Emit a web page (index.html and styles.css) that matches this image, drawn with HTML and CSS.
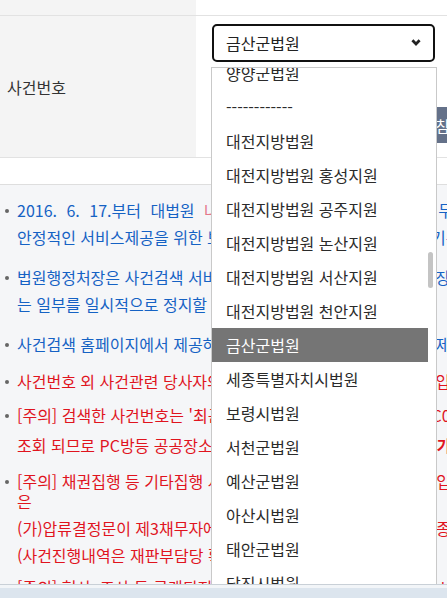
FILE: index.html
```html
<!DOCTYPE html>
<html lang="ko">
<head>
    <meta charset="UTF-8">
    <meta name="viewport" content="width=device-width, initial-scale=1.0">
    <title>나의 사건검색</title>
    <link rel="stylesheet" href="styles.css">
</head>
<body>
    <div class="page">
        <div class="form-row top-row">
            <div class="form-label"></div>
            <div class="form-field"></div>
        </div>
        <div class="form-row case-row">
            <div class="form-label">사건번호</div>
            <div class="form-field">
                <div class="select-box">
                    <span>금산군법원</span>
                    <svg width="10" height="7" viewBox="0 0 10 7"><path d="M1.4 1.3 L5 4.9 L8.6 1.3" fill="none" stroke="#222" stroke-width="2.8"/></svg>
                </div>
                <div class="guide-row">
                    <button class="guide-button">검색 지침</button>
                </div>
            </div>
        </div>
        <div class="spacer-row"></div>

        <div class="notice-area">
            <ul class="notice-list">
                <li class="blue">
                    <div>
                        <span class="line"><span class="date">2016. 6. 17.부터 대법원 </span><span class="pink">나의사건검색</span> 서비스 개인정보보호 무분별한 자동검색 방지를 위하여</span>
                        <span class="line">안정적인 서비스제공을 위한 보안문자 입력 절차를 도입하였고 기존 방식은 폐지되었습니다</span>
                    </div>
                </li>
                <li class="blue">
                    <div>
                        <span class="line">법원행정처장은 사건검색 서비스의 원활한 운영을 위해 필요 시 장애 처리를 위하여 서비스의 전부 또</span>
                        <span class="line">는 일부를 일시적으로 정지할 수 있습니다.</span>
                    </div>
                </li>
                <li class="blue mb-10">
                    <div>
                        <span class="line">사건검색 홈페이지에서 제공하는 정보는 법적 효력이 없으며 그 제공 내용은 참고용입니다</span>
                    </div>
                </li>
                <li class="red mb-7">
                    <div>
                        <span class="line">사건번호 외 사건관련 당사자의 개인정보 보호를 위해 당사자명 입력은 제한됩니다</span>
                    </div>
                </li>
                <li class="red mb-9">
                    <div>
                        <span class="line">[주의] 검색한 사건번호는 '최근검색사건' 목록에 저장되어 타 PC01 등에서도</span>
                        <span class="line pushed">조회 되므로 PC방등 공공장소에서는 이용후 반드시 검색기록을 <strong>가급적 삭제하시기 바랍니다</strong></span>
                    </div>
                </li>
                <li class="red mb-5">
                    <div>
                        <span class="line">[주의] 채권집행 등 기타집행 사건의 경우 당사자에게 송달된 후 입력된</span>
                        <span class="line pulled">은</span>
                        <span class="line">(가)압류결정문이 제3채무자에게 송달되었는지 여부 및 그 송달 종류</span>
                        <span class="line">(사건진행내역은 재판부담당 확인 요망)</span>
                    </div>
                </li>
                <li class="red">
                    <div>
                        <span class="line">[주의] 형사, 조사 등 공개되지 아니하는 사건은 검색되지 않으며 니</span>
                    </div>
                </li>
            </ul>
        </div>
    </div>

    <div class="court-list">
        <div class="court-scroll">
            <div class="court-item">양양군법원</div>
            <div class="court-item">------------</div>
            <div class="court-item">대전지방법원</div>
            <div class="court-item">대전지방법원 홍성지원</div>
            <div class="court-item">대전지방법원 공주지원</div>
            <div class="court-item">대전지방법원 논산지원</div>
            <div class="court-item">대전지방법원 서산지원</div>
            <div class="court-item">대전지방법원 천안지원</div>
            <div class="court-item selected">금산군법원</div>
            <div class="court-item">세종특별자치시법원</div>
            <div class="court-item">보령시법원</div>
            <div class="court-item">서천군법원</div>
            <div class="court-item">예산군법원</div>
            <div class="court-item">아산시법원</div>
            <div class="court-item">태안군법원</div>
            <div class="court-item">당진시법원</div>
        </div>
        <div class="court-scrollbar">
            <div class="thumb"></div>
        </div>
    </div>

    <div class="window-bottom"></div>
</body>
</html>
```

FILE: styles.css
```css
html, body {
    margin: 0;
    padding: 0;
    height: 100%;
    overflow: hidden;
}
body {
    font-family: "Noto Sans CJK KR", "Noto Sans", sans-serif;
    font-size: 16px;
    color: #333;
    background: #fff;
    width: 447px;
}
.page {
    height: 584px;
    overflow: hidden;
    width: 700px;
}
.form-row {
    display: flex;
    border-bottom: 1px solid #e2e2e2;
}
.form-label {
    width: 196px;
    flex-shrink: 0;
    background: #f4f4f4;
    display: flex;
    align-items: center;
    padding-left: 7px;
    box-sizing: border-box;
    color: #333;
}
.form-field {
    flex: 1;
    padding: 8px 0 0 16px;
}
.top-row {
    height: 15px;
}
.top-row .form-field {
    padding: 0;
}
.case-row {
    height: 141px;
}
.select-box {
    box-sizing: border-box;
    width: 223px;
    height: 38px;
    border: 2px solid #111;
    border-radius: 5px;
    display: flex;
    align-items: center;
    justify-content: space-between;
    padding: 0 12px 0 12px;
    color: #222;
}
.select-box svg {
    margin-top: -2px;
}
.guide-row {
    margin-top: 45px;
    padding-left: 168px;
}
.guide-button {
    height: 36px;
    border: none;
    background: #647189;
    color: #fff;
    font-family: inherit;
    font-size: 15px;
    padding: 0 10px;
}
.spacer-row {
    height: 26px;
    border-bottom: 1px solid #dedede;
}
.notice-area {
    background: #f5f6f8;
    padding-top: 12px;
    height: 500px;
}
.notice-list {
    list-style: none;
    margin: 0;
    padding: 0;
}
.notice-list li {
    display: flex;
    margin-bottom: 13px;
    line-height: 27px;
}
.notice-list li::before {
    content: "";
    width: 4px;
    height: 4px;
    border-radius: 50%;
    background: #666;
    flex-shrink: 0;
    margin: 12px 8px 0 5px;
}
.notice-list li.mb-10 { margin-bottom: 10px; }
.notice-list li.mb-9 { margin-bottom: 9px; }
.notice-list li.mb-7 { margin-bottom: 7px; }
.notice-list li.mb-5 { margin-bottom: 5px; }
.notice-list .line {
    display: block;
    white-space: nowrap;
}
.notice-list .pushed {
    margin-top: 3px;
}
.notice-list .pulled {
    margin-top: -7px;
}
.date {
    word-spacing: 5px;
}
.blue {
    color: #1562c4;
}
.red {
    color: #e0141e;
}
.pink {
    color: #e4788a;
}
.court-list {
    position: absolute;
    left: 211px;
    top: 67px;
    width: 224px;
    height: 530px;
    border: 1px solid #c9c9c9;
    background: #fff;
    display: flex;
    overflow: hidden;
}
.court-scroll {
    width: 216px;
    margin-top: -12px;
}
.court-item {
    height: 34px;
    line-height: 34px;
    padding-left: 14px;
    color: #2b2b2b;
    white-space: nowrap;
}
.court-item.selected {
    background: #757575;
    color: #fff;
}
.court-scrollbar {
    flex: 1;
    padding-top: 184px;
}
.thumb {
    width: 5px;
    height: 36px;
    border-radius: 3px;
    background: #c4c4c4;
}
.window-bottom {
    position: absolute;
    left: 0;
    top: 584px;
    width: 447px;
    height: 14px;
    border-top: 1px solid #c9d0d7;
    box-sizing: border-box;
    background: linear-gradient(#f2f5f8 0 3px, #dce5ee 3px);
}
```
